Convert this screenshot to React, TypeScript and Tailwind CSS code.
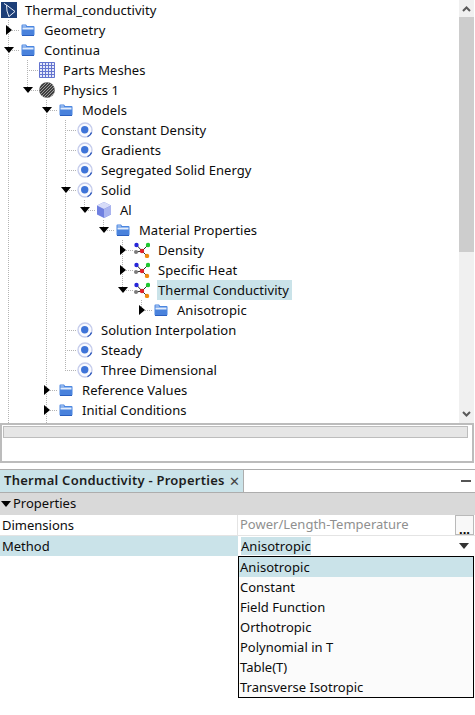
import React from "react";

const font = { fontFamily: '"Noto Sans", "Open Sans", sans-serif' };

function Folder() {
  return (
    <svg width="16" height="16" viewBox="0 0 16 16">
      <path d="M1.5 3.5q0-1 1-1h3.5l1.2 1.5h6.3q1 0 1 1v7.5q0 1-1 1h-11q-1 0-1-1z" fill="#4b86e0" />
      <path d="M2.5 3.5h3l.7 1H2.5z" fill="#cfe0fa" />
      <path d="M2.5 5.5h11v2h-11z" fill="#e3edfc" />
      <path d="M2.5 8h11v5h-11z" fill="#4a82dc" />
      <path d="M2 13.5h12" stroke="#2a5fc0" strokeWidth="1" />
    </svg>
  );
}

function Logo() {
  return (
    <svg width="16" height="16" viewBox="0 0 16 16">
      <rect x="0" y="0" width="16" height="16" fill="#1d3f78" />
      <path d="M3 1.5 5.5 3 6 9 8 15M5.5 3 14 9.5 8 14.5" stroke="#e6edf7" strokeWidth="1" fill="none" />
    </svg>
  );
}

function Grid() {
  return (
    <svg width="16" height="16" viewBox="0 0 16 16">
      <rect x="0" y="0" width="16" height="16" fill="#e6eafa" />
      <path d="M.5.5h15v15H.5zM3.5.5v15M6.5.5v15M9.5.5v15M12.5.5v15M.5 3.5h15M.5 6.5h15M.5 9.5h15M.5 12.5h15" stroke="#6474cf" strokeWidth="1" fill="none" />
    </svg>
  );
}

function Hatch() {
  return (
    <svg width="16" height="16" viewBox="0 0 16 16">
      <defs>
        <clipPath id="hatch-clip">
          <circle cx="8" cy="8" r="7.8" />
        </clipPath>
      </defs>
      <circle cx="8" cy="8" r="7.8" fill="#3f3f3f" />
      <g clipPath="url(#hatch-clip)" stroke="#a6a6a6" strokeWidth="0.9">
        <path d="M-2 4 4-2M-2 7 7-2M-2 10 10-2M-2 13 13-2M0 14 14 0M1 16 16 1M4 16 16 4M7 16 16 7M10 16 16 10" />
      </g>
    </svg>
  );
}

function Model() {
  return (
    <svg width="16" height="16" viewBox="0 0 16 16">
      <circle cx="8" cy="8" r="7" fill="#fafbff" stroke="#c6cdec" strokeWidth="1.4" />
      <path d="M10.5 14.6A7 7 0 0 0 14.6 10.5" stroke="#2a55b8" strokeWidth="1.3" fill="none" />
      <circle cx="7.7" cy="7.7" r="3.7" fill="#3f74d8" />
    </svg>
  );
}

function Cube() {
  return (
    <svg width="16" height="16" viewBox="0 0 16 16">
      <path d="M8 0 15 3.5v9L8 16 1 12.5v-9z" fill="#7080e0" />
      <path d="M8 0 15 3.5 8 7 1 3.5z" fill="#d7dcf8" />
      <path d="M8 7 15 3.5v9L8 16z" fill="#a9b4ef" />
    </svg>
  );
}

function Nodes() {
  return (
    <svg width="16" height="16" viewBox="0 0 16 16">
      <path d="M2.5 3 8 9M14 3 8 9M13 14 8 9M2 10 8 9" stroke="#2c2c2c" strokeWidth="1" />
      <circle cx="2.5" cy="3" r="2.2" fill="#2626d8" />
      <circle cx="14" cy="3" r="2.2" fill="#20c830" />
      <circle cx="13" cy="14" r="2.2" fill="#f08a10" />
      <circle cx="2" cy="10" r="2" fill="#7c7c7c" />
      <circle cx="8" cy="9" r="2.2" fill="#e0202c" />
    </svg>
  );
}

function Tri({ open }: { open: boolean }) {
  return open ? (
    <svg width="10" height="6" viewBox="0 0 10 6">
      <path d="M0 0h10L5 6z" fill="#000" />
    </svg>
  ) : (
    <svg width="6" height="10" viewBox="0 0 6 10">
      <path d="M0 0v10l6-5z" fill="#000" />
    </svg>
  );
}

type Row = {
  level: number;
  label: string;
  icon: React.ReactNode;
  exp?: "open" | "closed";
  selected?: boolean;
};

const rows: Row[] = [
  { level: 0, label: "Thermal_conductivity", icon: <Logo /> },
  { level: 1, label: "Geometry", icon: <Folder />, exp: "closed" },
  { level: 1, label: "Continua", icon: <Folder />, exp: "open" },
  { level: 2, label: "Parts Meshes", icon: <Grid /> },
  { level: 2, label: "Physics 1", icon: <Hatch />, exp: "open" },
  { level: 3, label: "Models", icon: <Folder />, exp: "open" },
  { level: 4, label: "Constant Density", icon: <Model /> },
  { level: 4, label: "Gradients", icon: <Model /> },
  { level: 4, label: "Segregated Solid Energy", icon: <Model /> },
  { level: 4, label: "Solid", icon: <Model />, exp: "open" },
  { level: 5, label: "Al", icon: <Cube />, exp: "open" },
  { level: 6, label: "Material Properties", icon: <Folder />, exp: "open" },
  { level: 7, label: "Density", icon: <Nodes />, exp: "closed" },
  { level: 7, label: "Specific Heat", icon: <Nodes />, exp: "closed" },
  { level: 7, label: "Thermal Conductivity", icon: <Nodes />, exp: "open", selected: true },
  { level: 8, label: "Anisotropic", icon: <Folder />, exp: "closed" },
  { level: 4, label: "Solution Interpolation", icon: <Model /> },
  { level: 4, label: "Steady", icon: <Model /> },
  { level: 4, label: "Three Dimensional", icon: <Model /> },
  { level: 3, label: "Reference Values", icon: <Folder />, exp: "closed" },
  { level: 3, label: "Initial Conditions", icon: <Folder />, exp: "closed" },
];

function Guides() {
  const v: [number, number, number][] = [
    [8.5, 20, 423],
    [27.5, 60, 90],
    [46.5, 100, 423],
    [65.5, 120, 370],
    [84.5, 200, 210],
    [103.5, 220, 230],
    [122.5, 240, 290],
    [141.5, 300, 310],
  ];
  const d =
    v.map(([x, a, b]) => `M${x} ${a}V${b}`).join("") +
    rows
      .map((r, i) => {
        if (r.level === 0) return "";
        const x = 19 * (r.level - 1) + 8;
        return `M${x} ${i * 20 + 10.5}h12`;
      })
      .join("");
  return (
    <svg className="absolute left-0 top-0 pointer-events-none" width="240" height="423">
      <path d={d} stroke="#b4b4b4" strokeWidth="1" strokeDasharray="1 1" fill="none" />
    </svg>
  );
}

function TreeRow({ r }: { r: Row }) {
  return (
    <div className="relative flex h-5 items-center">
      {r.level > 0 && <div className="shrink-0" style={{ width: (r.level - 1) * 19 }} />}
      {r.level > 0 && (
        <div className="flex w-[19px] shrink-0 items-center justify-center pr-px">
          {r.exp && <Tri open={r.exp === "open"} />}
        </div>
      )}
      <div className="ml-px flex w-4 shrink-0 items-center justify-center bg-white">{r.icon}</div>
      <div className={`ml-[7px] h-5 pl-px leading-5 tracking-[0.06px] ${r.selected ? "bg-[#cae3e9] pr-[3px]" : "pr-px"}`}>{r.label}</div>
    </div>
  );
}

const options = ["Constant", "Field Function", "Orthotropic", "Polynomial in T", "Table(T)", "Transverse Isotropic"];

export default function App() {
  return (
    <div className="relative h-[715px] w-[475px] overflow-hidden bg-white text-[13px] text-[#0c0c0c]" style={font}>
      <div className="flex h-[423px]">
        <div className="relative w-[459px] overflow-hidden">
          <Guides />
          <div className="relative">
            {rows.map((r) => (
              <TreeRow key={r.label + r.level} r={r} />
            ))}
          </div>
        </div>
        <div className="flex w-[15px] flex-col bg-[#f0f0f0]">
          <div className="flex h-[17px] items-center justify-center">
            <svg width="9" height="7" viewBox="0 0 9 7">
              <path d="M1 6 4.5 2.5 8 6" stroke="#5a5a5a" strokeWidth="2" fill="none" />
            </svg>
          </div>
          <div className="h-[235px] bg-[#cdcdcd]" />
          <div className="flex-1" />
          <div className="flex h-[17px] items-center justify-center">
            <svg width="9" height="7" viewBox="0 0 9 7">
              <path d="M1 1 4.5 4.5 8 1" stroke="#5a5a5a" strokeWidth="2" fill="none" />
            </svg>
          </div>
        </div>
      </div>

      <div className="h-10 w-[474px] border-2 border-[#bcbcbc] bg-white p-px">
        <div className="mr-[3px] h-[12px] border border-[#bdbdbd] bg-[#e6e6e6]" />
      </div>

      <div className="mt-[6px] flex h-[24px] items-stretch border-y border-[#adadad] bg-white">
        <div className="flex w-[244px] items-center border-r border-[#adadad] bg-[#cae3e9] pl-1 font-semibold tracking-[0.25px] text-[#1d1d1d]">
          <span className="flex-1 truncate">Thermal Conductivity - Properties</span>
          <span className="mr-[3px] text-[13px] leading-none font-normal tracking-normal text-[#444]">✕</span>
        </div>
        <div className="flex flex-1 items-center justify-end pr-[4px]">
          <div className="h-[2px] w-[10px] bg-[#555]" />
        </div>
      </div>

      <div className="flex h-[22px] items-center bg-[#d9d9d9] pl-[1px]">
        <svg width="11" height="6" viewBox="0 0 11 6">
          <path d="M0 0h10L5 6z" fill="#000" />
        </svg>
        <span className="ml-px">Properties</span>
      </div>

      <div className="flex h-[21px] border-b border-[#e4e4e4]">
        <div className="w-[238px] border-r border-[#e4e4e4] pl-[2px] leading-5">Dimensions</div>
        <div className="flex flex-1 items-center pl-[1px]">
          <span className="ml-px text-[#8f8f8f]">Power/Length-Temperature</span>
          <div className="ml-auto mr-[1px] flex h-[20px] w-[19px] items-end justify-center border border-[#b9b9b9] bg-[#f8f8f8]">
            <span className="text-[13px] font-bold leading-[10px] text-black">...</span>
          </div>
        </div>
      </div>

      <div className="flex h-[20px]">
        <div className="w-[238px] bg-[#cae3e9] pl-[2px] leading-5">Method</div>
        <div className="flex flex-1 items-center pl-[3px]">
          <span className="bg-[#cae3e9] leading-[18px] tracking-[0.06px]">Anisotropic</span>
          <svg className="ml-auto mr-[6px]" width="10" height="6" viewBox="0 0 10 6">
            <path d="M0 0h10L5 6z" fill="#333" />
          </svg>
        </div>
      </div>

      <div className="absolute left-[238px] top-[556px] w-[236px] border border-black bg-[#fbfbfb]">
        <div className="h-5 bg-[#cae3e9] pl-px leading-5 tracking-[0.06px]">Anisotropic</div>
        {options.map((o) => (
          <div key={o} className="h-5 pl-px leading-5">
            {o}
          </div>
        ))}
      </div>
    </div>
  );
}
